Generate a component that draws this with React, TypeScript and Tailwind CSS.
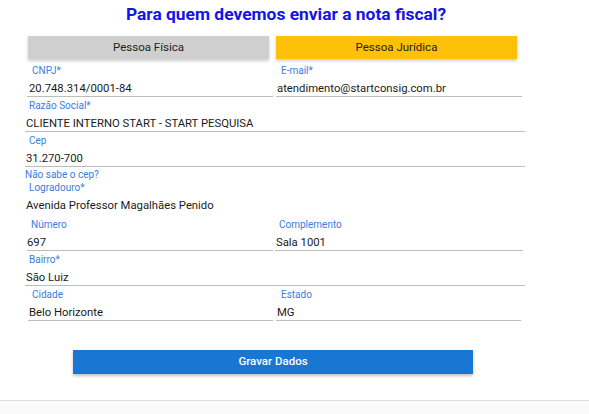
import React from "react";

type FieldProps = {
  label: string;
  value: string;
  className?: string;
  labelPad?: string;
  valuePad?: string;
  noLine?: boolean;
};

function Field({ label, value, className = "", labelPad = "pl-[4px]", valuePad = "pl-[1px]", noLine }: FieldProps) {
  return (
    <div className={`mb-[1px] ${className}`}>
      <div className={`h-[12px] text-[10px] leading-[15px] text-[#3b7ddd] ${labelPad}`}>{label}</div>
      <div
        className={`mt-[4px] h-[18px] text-[11.3px] leading-[19px] text-[#1a1a1a] border-b ${
          noLine ? "border-transparent" : "border-[#bdbdbd]"
        } ${valuePad}`}
      >
        {value}
      </div>
    </div>
  );
}

export default function App() {
  return (
    <div className="w-[589px] h-[414px] bg-white font-['Roboto',sans-serif] flex flex-col">
      <div className="h-[401px] border-b border-[#dcdcdc]">
        <h1 className="h-[30px] pr-[17px] text-center text-[17.4px] leading-[29px] font-bold text-[#1414e6]">
          Para quem devemos enviar a nota fiscal?
        </h1>

        <div className="ml-[25px] w-[500px]">
          <div className="mt-[6px] grid grid-cols-2">
            <button className="ml-[3px] w-[241px] h-[23px] bg-[#cfcfcf] text-[11.5px] text-[#222] shadow-[0_2px_3px_rgba(0,0,0,0.2)]">
              Pessoa Física
            </button>
            <button className="ml-[1px] w-[241px] h-[23px] bg-[#ffc107] text-[11.5px] text-[#222] shadow-[0_2px_3px_rgba(0,0,0,0.2)]">
              Pessoa Jurídica
            </button>
          </div>

          <div className="mt-[4px] grid grid-cols-2">
            <Field label="CNPJ*" value="20.748.314/0001-84" className="ml-[2px] w-[246px]" labelPad="pl-[5px]" valuePad="pl-[2px]" />
            <Field label="E-mail*" value="atendimento@startconsig.com.br" className="ml-[1px] w-[246px]" labelPad="pl-[5px]" valuePad="pl-[1px]" />
          </div>

          <Field label="Razão Social*" value="CLIENTE INTERNO START - START PESQUISA" />
          <Field label="Cep" value="31.270-700" />
          <div className="h-[10px] text-[10px] leading-[13px] text-[#3b7ddd]">Não sabe o cep?</div>
          <div className="mt-[2px]">
            <Field label="Logradouro*" value="Avenida Professor Magalhães Penido" noLine className="mb-[3px]" />
          </div>

          <div className="grid grid-cols-2">
            <Field label="Número" value="697" className="ml-[2px] w-[246px]" labelPad="pl-[4px]" valuePad="pl-[0px]" />
            <Field label="Complemento" value="Sala 1001" className="w-[248px]" labelPad="pl-[4px]" valuePad="pl-[1px]" />
          </div>

          <Field label="Bairro*" value="São Luiz" />

          <div className="grid grid-cols-2">
            <Field label="Cidade" value="Belo Horizonte" className="ml-[3px] w-[245px]" labelPad="pl-[4px]" valuePad="pl-[1px]" />
            <Field label="Estado" value="MG" className="ml-[1px] w-[245px]" labelPad="pl-[5px]" valuePad="pl-[1px]" />
          </div>

          <button className="mt-[28px] ml-[48px] w-[400px] h-[24px] bg-[#1976d2] text-white text-[11.5px] font-medium shadow-[0_2px_3px_rgba(0,0,0,0.25)]">
            Gravar Dados
          </button>
        </div>
      </div>
      <div className="flex-1 bg-[#fafafa]" />
    </div>
  );
}
